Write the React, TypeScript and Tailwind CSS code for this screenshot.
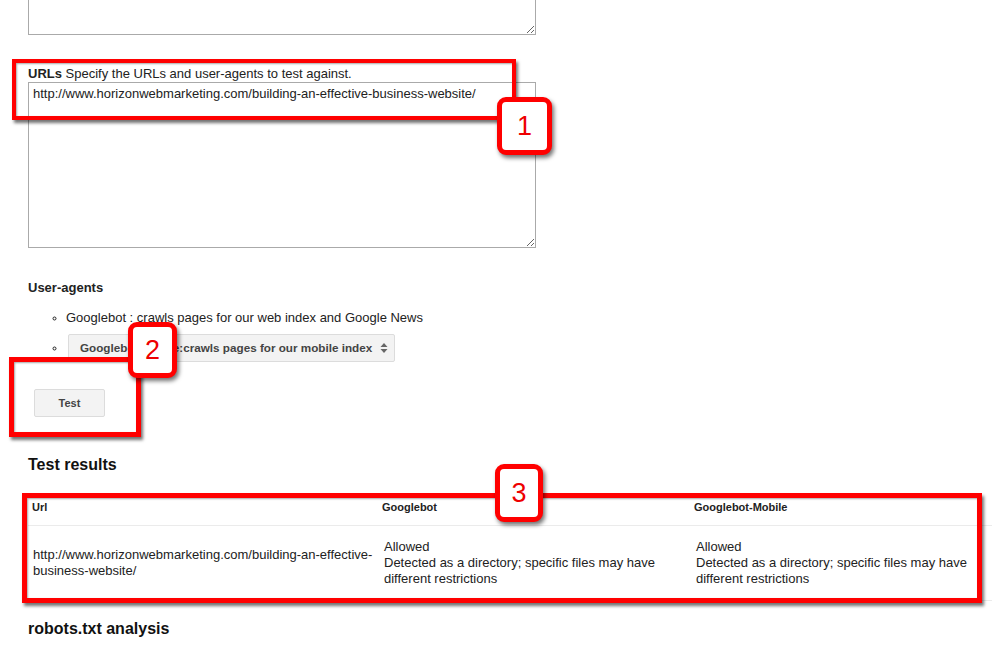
import React from "react";

const RedBox = ({ className }: { className: string }) => (
  <div
    className={`absolute border-[#f00] bg-transparent shadow-[2px_3px_3px_rgba(0,0,0,0.55),inset_1px_1px_2px_rgba(0,0,0,0.35)] ${className}`}
  />
);

const Badge = ({ n, className }: { n: string; className: string }) => (
  <div
    className={`absolute flex items-center justify-center rounded-[9px] border-[5px] border-[#f00] bg-white text-[27px] leading-none text-[#e00] shadow-[2px_3px_4px_rgba(0,0,0,0.55)] ${className}`}
  >
    {n}
  </div>
);

export default function App() {
  return (
    <div className="relative h-[654px] w-[993px] overflow-hidden bg-white font-['Liberation_Sans',Arial,sans-serif] text-[#222]">
      <div className="flex flex-col pl-[28px]">
        <textarea
          readOnly
          className="-mt-[10px] block h-[45px] w-[508px] border border-[#aaa] bg-white outline-none"
        />
        <div className="mt-[31px] h-[16px] text-[13px] leading-[16px]">
          <b>URLs</b> Specify the URLs and user-agents to test against.
        </div>
        <textarea
          readOnly
          value="http://www.horizonwebmarketing.com/building-an-effective-business-website/"
          className="block h-[166px] w-[508px] resize border border-[#aaa] bg-white px-[4px] pt-[3px] text-[13px] leading-[16px] text-[#222] outline-none"
        />
        <div className="mt-[32px] h-[16px] text-[13px] font-bold leading-[16px]">User-agents</div>
        <ul className="mt-[14px] list-[circle] pl-[38px] text-[13px] leading-[16px] marker:text-[10px]">
          <li className="h-[16px]">Googlebot : crawls pages for our web index and Google News</li>
          <li className="mt-[8px] h-[28px]">
            <div className="ml-[2px] flex h-[28px] w-[327px] items-center justify-between whitespace-nowrap rounded-[2px] border border-[#dcdcdc] bg-[#f3f3f3] pl-[11px] pr-[6px] text-[11.7px] font-bold text-[#444]">
              <span>Googlebot-Mobile:crawls pages for our mobile index</span>
              <svg width="8" height="12" viewBox="0 0 8 12" className="shrink-0">
                <path d="M4 1 L7.5 5 L0.5 5 Z" fill="#666" />
                <path d="M4 11 L7.5 7 L0.5 7 Z" fill="#666" />
              </svg>
            </div>
          </li>
        </ul>
        <div className="ml-[6px] mt-[27px] flex h-[28px] w-[71px] items-center justify-center rounded-[2px] border border-[#dcdcdc] bg-[#f3f3f3] text-[11px] font-bold text-[#444]">
          Test
        </div>
        <div className="mt-[38px] h-[20px] text-[16px] font-bold leading-[20px] text-[#111]">Test results</div>
        <div className="mt-[20px] w-[964px]">
          <div className="grid h-[31px] grid-cols-[350px_312px_302px] border-b border-[#ebebeb] text-[11px] font-bold leading-[14px] text-[#222]">
            <div className="pl-[4px] pt-[5px]">Url</div>
            <div className="pl-[4px] pt-[5px]">Googlebot</div>
            <div className="pl-[4px] pt-[5px]">Googlebot-Mobile</div>
          </div>
          <div className="grid h-[75px] grid-cols-[350px_312px_302px] items-center border-b border-[#ebebeb] text-[13px] leading-[16px] text-[#222]">
            <div className="pl-[5px] pr-[4px]">
              http://www.horizonwebmarketing.com/building-an-effective-business-website/
            </div>
            <div className="pl-[6px] pr-[4px]">
              Allowed
              <br />
              Detected as a directory; specific files may have different restrictions
            </div>
            <div className="pl-[6px] pr-[4px]">
              Allowed
              <br />
              Detected as a directory; specific files may have different restrictions
            </div>
          </div>
        </div>
        <div className="mt-[18px] h-[20px] text-[16px] font-bold leading-[20px] text-[#111]">robots.txt analysis</div>
      </div>

      <RedBox className="left-[12px] top-[59px] h-[61px] w-[504px] border-[4px]" />
      <Badge n="1" className="left-[497px] top-[97px] h-[58px] w-[55px]" />

      <RedBox className="left-[9px] top-[357px] h-[80px] w-[132px] border-[5px]" />
      <Badge n="2" className="left-[128px] top-[322px] h-[56px] w-[49px]" />

      <RedBox className="left-[22px] top-[493px] h-[110px] w-[960px] border-[5px]" />
      <Badge n="3" className="left-[495px] top-[464px] h-[58px] w-[48px]" />
    </div>
  );
}
